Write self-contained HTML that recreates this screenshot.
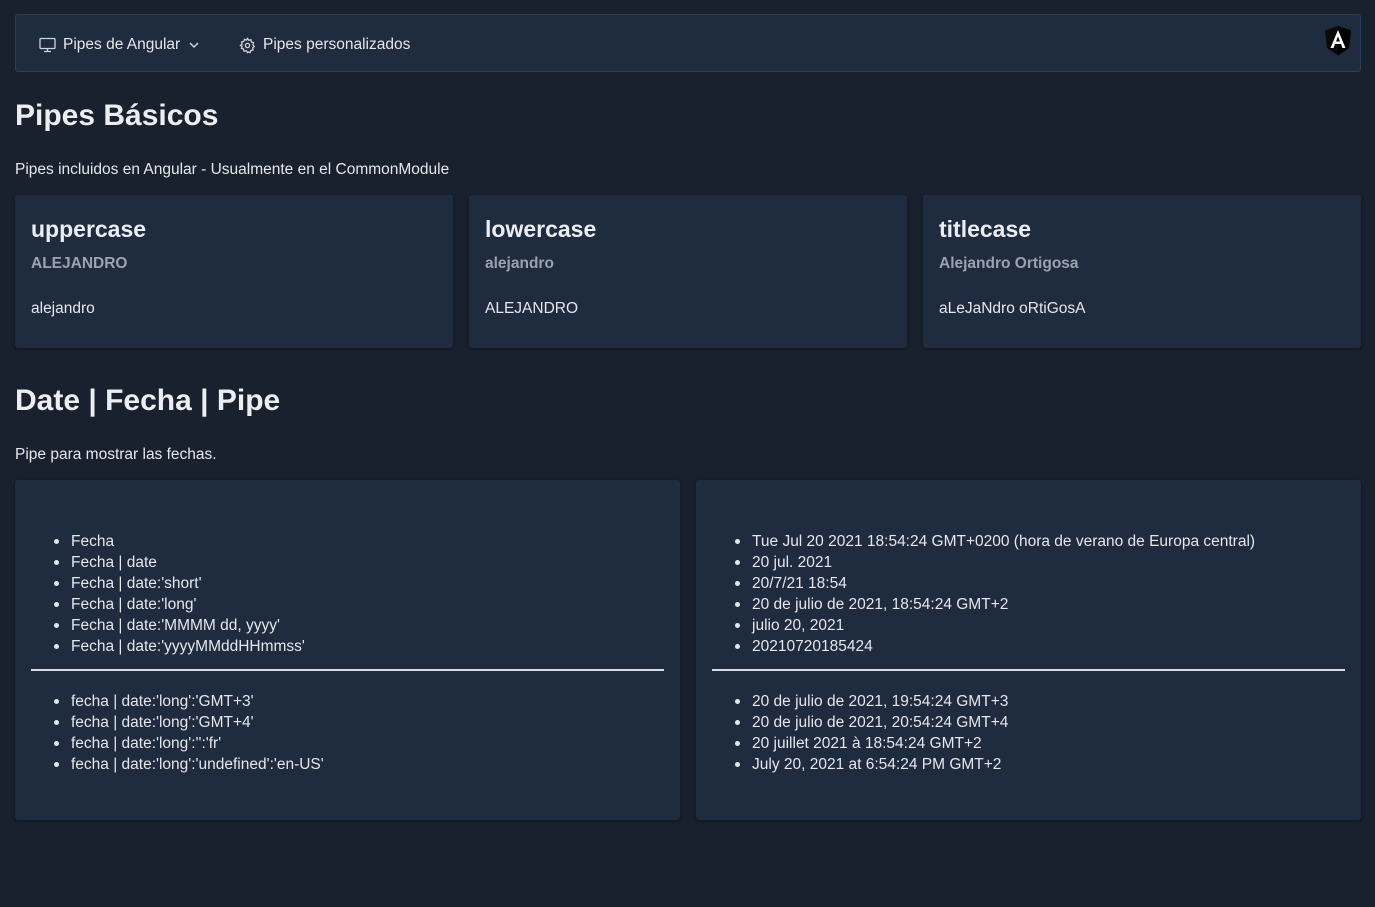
<!DOCTYPE html>
<html><head><meta charset="utf-8"><style>
*{box-sizing:border-box;margin:0;padding:0}
body{width:1375px;height:907px;background:#19212f;color:#e5e7eb;font-family:"Liberation Sans",sans-serif;font-size:15.5px;overflow:hidden;position:relative}
.nav{position:absolute;left:15px;top:14px;width:1346px;height:58px;background:#1f2b3e;border:1px solid #2f3e55;border-radius:3px}
.nav .it{position:absolute;top:21px;font-size:15.5px;color:#e5e7eb;display:flex;align-items:center;gap:7px}
.logo{position:absolute;right:8px;top:10px}
h1{position:absolute;left:15px;font-size:30px;font-weight:bold;color:#eceef1}
p.s{position:absolute;left:15px}
.card{position:absolute;background:#1f2b3f;border-radius:3px;box-shadow:0 1px 3px rgba(0,0,0,.4)}
.card h3{position:absolute;left:16px;top:21px;font-size:23px;font-weight:bold;color:#eceef1}
.card .sub{position:absolute;left:16px;top:60px;font-size:15.5px;font-weight:bold;color:#9aa3ae}
.card .v{position:absolute;left:16px;top:105px}
ul{position:absolute;left:56px;list-style:disc;line-height:21px}
li{height:21px;line-height:21px}
li::marker{font-size:18px}
hr{position:absolute;left:16px;right:16px;top:189px;border:0;border-top:2px solid #d8dadd}
</style></head><body>
<div class="nav">
 <div class="it" style="left:23px"><svg width="17" height="16" viewBox="0 0 17 16" fill="none" stroke="#cfd4da" stroke-width="1.3"><rect x="1" y="1.5" width="15" height="10" rx="1"/><path d="M8.5 11.5v3M5 14.5h7"/></svg>Pipes de Angular <svg width="14" height="10" viewBox="0 0 14 10" fill="none" stroke="#cfd4da" stroke-width="1.5"><path d="M3 3l4 4 4-4"/></svg></div>
 <div class="it" style="left:223px;"><svg width="17" height="17" viewBox="0 0 24 24" fill="none" stroke="#cfd4da" stroke-width="1.8"><circle cx="12" cy="12" r="3"/><path d="M12 2l1.8 2.6 3.1-.7.6 3.1 3 1-1 3 2 2.3-2.3 2 .7 3.1-3.1.6-1 3-3-1L12 22l-1.8-2.6-3.1.7-.6-3.1-3-1 1-3L2 12l2.3-2-.7-3.1 3.1-.6 1-3 3 1z"/></svg>Pipes personalizados</div>
 <svg class="logo" width="28" height="32" viewBox="0 0 28 32"><path d="M14 1L1 5.5 3 23l11 7.5 11-7.5 2-17.5z" fill="#0a0a0c"/><path d="M14 1v29.5l11-7.5 2-17.5z" fill="#000"/><path d="M14 5L6.5 23h3l1.5-4h6l1.5 4h3zM12 16.5l2-5 2 5z" fill="#fff"/></svg>
</div>
<h1 style="top:99px">Pipes Básicos</h1>
<p class="s" style="top:161px">Pipes incluidos en Angular - Usualmente en el CommonModule</p>
<div class="card" style="left:15px;top:195px;width:438px;height:153px"><h3>uppercase</h3><div class="sub">ALEJANDRO</div><div class="v">alejandro</div></div>
<div class="card" style="left:469px;top:195px;width:438px;height:153px"><h3>lowercase</h3><div class="sub">alejandro</div><div class="v">ALEJANDRO</div></div>
<div class="card" style="left:923px;top:195px;width:438px;height:153px"><h3>titlecase</h3><div class="sub">Alejandro Ortigosa</div><div class="v">aLeJaNdro oRtiGosA</div></div>
<h1 style="top:384px">Date | Fecha | Pipe</h1>
<p class="s" style="top:446px">Pipe para mostrar las fechas.</p>
<div class="card" style="left:15px;top:480px;width:665px;height:340px">
<ul style="top:50px"><li>Fecha</li><li>Fecha | date</li><li>Fecha | date:'short'</li><li>Fecha | date:'long'</li><li>Fecha | date:'MMMM dd, yyyy'</li><li>Fecha | date:'yyyyMMddHHmmss'</li></ul>
<hr>
<ul style="top:210px"><li>fecha | date:'long':'GMT+3'</li><li>fecha | date:'long':'GMT+4'</li><li>fecha | date:'long':'':'fr'</li><li>fecha | date:'long':'undefined':'en-US'</li></ul>
</div>
<div class="card" style="left:696px;top:480px;width:665px;height:340px">
<ul style="top:50px"><li>Tue Jul 20 2021 18:54:24 GMT+0200 (hora de verano de Europa central)</li><li>20 jul. 2021</li><li>20/7/21 18:54</li><li>20 de julio de 2021, 18:54:24 GMT+2</li><li>julio 20, 2021</li><li>20210720185424</li></ul>
<hr>
<ul style="top:210px"><li>20 de julio de 2021, 19:54:24 GMT+3</li><li>20 de julio de 2021, 20:54:24 GMT+4</li><li>20 juillet 2021 à 18:54:24 GMT+2</li><li>July 20, 2021 at 6:54:24 PM GMT+2</li></ul>
</div>
</body></html>
